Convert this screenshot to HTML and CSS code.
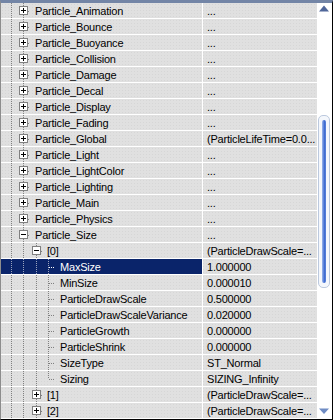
FILE: index.html
```html
<!DOCTYPE html>
<html lang="en">
<head>
  <meta charset="UTF-8">
  <title>Properties - Particle</title>
  <link rel="stylesheet" href="styles.css">
</head>
<body>
  <div class="panel">
    <div class="grid">
      <!-- collapsed groups -->
      <div class="row"><div class="name"><span class="g w12"></span><span class="node w13"><svg class="box" width="9" height="9"><rect x=".5" y=".5" width="8" height="8" fill="#fff" stroke="#808080"/><path d="M2 4.5h5M4.5 2v5" stroke="#000"/></svg><span class="link"></span></span><span class="label">Particle_Animation</span></div><div class="val">...</div></div>
      <div class="row"><div class="name"><span class="g w12"></span><span class="node w13"><svg class="box" width="9" height="9"><rect x=".5" y=".5" width="8" height="8" fill="#fff" stroke="#808080"/><path d="M2 4.5h5M4.5 2v5" stroke="#000"/></svg><span class="link"></span></span><span class="label">Particle_Bounce</span></div><div class="val">...</div></div>
      <div class="row"><div class="name"><span class="g w12"></span><span class="node w13"><svg class="box" width="9" height="9"><rect x=".5" y=".5" width="8" height="8" fill="#fff" stroke="#808080"/><path d="M2 4.5h5M4.5 2v5" stroke="#000"/></svg><span class="link"></span></span><span class="label">Particle_Buoyance</span></div><div class="val">...</div></div>
      <div class="row"><div class="name"><span class="g w12"></span><span class="node w13"><svg class="box" width="9" height="9"><rect x=".5" y=".5" width="8" height="8" fill="#fff" stroke="#808080"/><path d="M2 4.5h5M4.5 2v5" stroke="#000"/></svg><span class="link"></span></span><span class="label">Particle_Collision</span></div><div class="val">...</div></div>
      <div class="row"><div class="name"><span class="g w12"></span><span class="node w13"><svg class="box" width="9" height="9"><rect x=".5" y=".5" width="8" height="8" fill="#fff" stroke="#808080"/><path d="M2 4.5h5M4.5 2v5" stroke="#000"/></svg><span class="link"></span></span><span class="label">Particle_Damage</span></div><div class="val">...</div></div>
      <div class="row"><div class="name"><span class="g w12"></span><span class="node w13"><svg class="box" width="9" height="9"><rect x=".5" y=".5" width="8" height="8" fill="#fff" stroke="#808080"/><path d="M2 4.5h5M4.5 2v5" stroke="#000"/></svg><span class="link"></span></span><span class="label">Particle_Decal</span></div><div class="val">...</div></div>
      <div class="row"><div class="name"><span class="g w12"></span><span class="node w13"><svg class="box" width="9" height="9"><rect x=".5" y=".5" width="8" height="8" fill="#fff" stroke="#808080"/><path d="M2 4.5h5M4.5 2v5" stroke="#000"/></svg><span class="link"></span></span><span class="label">Particle_Display</span></div><div class="val">...</div></div>
      <div class="row"><div class="name"><span class="g w12"></span><span class="node w13"><svg class="box" width="9" height="9"><rect x=".5" y=".5" width="8" height="8" fill="#fff" stroke="#808080"/><path d="M2 4.5h5M4.5 2v5" stroke="#000"/></svg><span class="link"></span></span><span class="label">Particle_Fading</span></div><div class="val">...</div></div>
      <div class="row"><div class="name"><span class="g w12"></span><span class="node w13"><svg class="box" width="9" height="9"><rect x=".5" y=".5" width="8" height="8" fill="#fff" stroke="#808080"/><path d="M2 4.5h5M4.5 2v5" stroke="#000"/></svg><span class="link"></span></span><span class="label">Particle_Global</span></div><div class="val">(ParticleLifeTime=0.0...</div></div>
      <div class="row"><div class="name"><span class="g w12"></span><span class="node w13"><svg class="box" width="9" height="9"><rect x=".5" y=".5" width="8" height="8" fill="#fff" stroke="#808080"/><path d="M2 4.5h5M4.5 2v5" stroke="#000"/></svg><span class="link"></span></span><span class="label">Particle_Light</span></div><div class="val">...</div></div>
      <div class="row"><div class="name"><span class="g w12"></span><span class="node w13"><svg class="box" width="9" height="9"><rect x=".5" y=".5" width="8" height="8" fill="#fff" stroke="#808080"/><path d="M2 4.5h5M4.5 2v5" stroke="#000"/></svg><span class="link"></span></span><span class="label">Particle_LightColor</span></div><div class="val">...</div></div>
      <div class="row"><div class="name"><span class="g w12"></span><span class="node w13"><svg class="box" width="9" height="9"><rect x=".5" y=".5" width="8" height="8" fill="#fff" stroke="#808080"/><path d="M2 4.5h5M4.5 2v5" stroke="#000"/></svg><span class="link"></span></span><span class="label">Particle_Lighting</span></div><div class="val">...</div></div>
      <div class="row"><div class="name"><span class="g w12"></span><span class="node w13"><svg class="box" width="9" height="9"><rect x=".5" y=".5" width="8" height="8" fill="#fff" stroke="#808080"/><path d="M2 4.5h5M4.5 2v5" stroke="#000"/></svg><span class="link"></span></span><span class="label">Particle_Main</span></div><div class="val">...</div></div>
      <div class="row"><div class="name"><span class="g w12"></span><span class="node w13"><svg class="box" width="9" height="9"><rect x=".5" y=".5" width="8" height="8" fill="#fff" stroke="#808080"/><path d="M2 4.5h5M4.5 2v5" stroke="#000"/></svg><span class="link"></span></span><span class="label">Particle_Physics</span></div><div class="val">...</div></div>

      <!-- expanded group -->
      <div class="row"><div class="name"><span class="g w12"></span><span class="node w13"><svg class="box" width="9" height="9"><rect x=".5" y=".5" width="8" height="8" fill="#fff" stroke="#808080"/><path d="M2 4.5h5" stroke="#000"/></svg><span class="link"></span></span><span class="label">Particle_Size</span></div><div class="val">...</div></div>
      <div class="row"><div class="name"><span class="g w12"></span><span class="g w13"></span><span class="node w12"><svg class="box" width="9" height="9"><rect x=".5" y=".5" width="8" height="8" fill="#fff" stroke="#808080"/><path d="M2 4.5h5" stroke="#000"/></svg><span class="link"></span></span><span class="label">[0]</span></div><div class="val">(ParticleDrawScale=...</div></div>

      <div class="row selected"><div class="name"><span class="g w12"></span><span class="g w13"></span><span class="g w12"></span><span class="node w13"><span class="stub"></span><span class="link"></span></span><span class="label">MaxSize</span></div><div class="val">1.000000</div></div>
      <div class="row"><div class="name"><span class="g w12"></span><span class="g w13"></span><span class="g w12"></span><span class="node w13"><span class="stub"></span><span class="link"></span></span><span class="label">MinSize</span></div><div class="val">0.000010</div></div>
      <div class="row"><div class="name"><span class="g w12"></span><span class="g w13"></span><span class="g w12"></span><span class="node w13"><span class="stub"></span><span class="link"></span></span><span class="label">ParticleDrawScale</span></div><div class="val">0.500000</div></div>
      <div class="row"><div class="name"><span class="g w12"></span><span class="g w13"></span><span class="g w12"></span><span class="node w13"><span class="stub"></span><span class="link"></span></span><span class="label">ParticleDrawScaleVariance</span></div><div class="val">0.020000</div></div>
      <div class="row"><div class="name"><span class="g w12"></span><span class="g w13"></span><span class="g w12"></span><span class="node w13"><span class="stub"></span><span class="link"></span></span><span class="label">ParticleGrowth</span></div><div class="val">0.000000</div></div>
      <div class="row"><div class="name"><span class="g w12"></span><span class="g w13"></span><span class="g w12"></span><span class="node w13"><span class="stub"></span><span class="link"></span></span><span class="label">ParticleShrink</span></div><div class="val">0.000000</div></div>
      <div class="row"><div class="name"><span class="g w12"></span><span class="g w13"></span><span class="g w12"></span><span class="node w13"><span class="stub"></span><span class="link"></span></span><span class="label">SizeType</span></div><div class="val">ST_Normal</div></div>
      <div class="row"><div class="name"><span class="g w12"></span><span class="g w13"></span><span class="g w12"></span><span class="node last w13"><span class="stub"></span><span class="link"></span></span><span class="label">Sizing</span></div><div class="val">SIZING_Infinity</div></div>

      <div class="row"><div class="name"><span class="g w12"></span><span class="g w13"></span><span class="node w12"><svg class="box" width="9" height="9"><rect x=".5" y=".5" width="8" height="8" fill="#fff" stroke="#808080"/><path d="M2 4.5h5M4.5 2v5" stroke="#000"/></svg><span class="link"></span></span><span class="label">[1]</span></div><div class="val">(ParticleDrawScale=...</div></div>
      <div class="row"><div class="name"><span class="g w12"></span><span class="g w13"></span><span class="node w12"><svg class="box" width="9" height="9"><rect x=".5" y=".5" width="8" height="8" fill="#fff" stroke="#808080"/><path d="M2 4.5h5M4.5 2v5" stroke="#000"/></svg><span class="link"></span></span><span class="label">[2]</span></div><div class="val">(ParticleDrawScale=...</div></div>
    </div>

    <div class="scrollbar">
      <svg class="arrow" width="15" height="12"><path d="M2 8.5L7 2.5L12 8.5Z" fill="#50679a"/></svg>
      <div class="thumb"><div class="thumb-bar"></div></div>
      <svg class="arrow down" width="15" height="12"><path d="M2 2.5L12 2.5L7 8Z" fill="#6f8cc4"/></svg>
    </div>
  </div>
</body>
</html>
```

FILE: styles.css
```css
body {
  margin: 0;
  padding: 0;
  background: #fff;
  font-family: "Liberation Sans", Arial, sans-serif;
  font-size: 11px;
  letter-spacing: -0.2px;
  color: #000;
}

.panel {
  display: flex;
  width: 333px;
  height: 420px;
  box-sizing: border-box;
  border-top: 3px solid #7385a6;
  border-left: 1px solid #8d8d8d;
  border-right: 1px solid #000;
  border-bottom: 1px solid #000;
  overflow: hidden;
}

.grid {
  width: 316px;
  display: flex;
  flex-direction: column;
}

.row {
  display: flex;
  height: 16px;
  box-sizing: border-box;
  border-bottom: 1px solid #fff;
  background-color: #e0e0e0;
  background-image: radial-gradient(circle, #d6d6d6 0.7px, transparent 0.8px);
  background-size: 3px 3px;
}

.name {
  display: flex;
  width: 202px;
  box-sizing: border-box;
  padding-left: 4px;
  border-right: 1px solid #fff;
  overflow: hidden;
  white-space: nowrap;
}

.val {
  flex: 1;
  padding-left: 4px;
  padding-top: 1px;
  line-height: 15px;
  overflow: hidden;
  white-space: nowrap;
}

.label {
  padding-top: 1px;
  padding-left: 1px;
  line-height: 15px;
}

/* tree guides: dotted vertical line 6px into each column */
.g,
.node {
  flex: none;
  height: 15px;
  background-image: repeating-linear-gradient(#808080 0 1px, transparent 1px 2px);
  background-size: 1px 15px;
  background-repeat: no-repeat;
  background-position: 6px 0;
}

.w12 { width: 12px; }
.w13 { width: 13px; }

.node {
  display: flex;
  align-items: center;
  padding-right: 4px;
}

.node.last {
  background-size: 1px 8px;
}

.box {
  display: block;
  flex: none;
  margin-left: 2px;
}

.stub {
  flex: none;
  width: 7px;
}

.link {
  flex: 1;
  height: 1px;
  margin-top: 1px;
  background-image: repeating-linear-gradient(to right, #808080 0 1px, transparent 1px 2px);
}

.selected .name {
  background: #0a246a;
  color: #fff;
}

.selected .g,
.selected .node {
  background-image: repeating-linear-gradient(#9aa3bd 0 1px, transparent 1px 2px);
}

.selected .link {
  background-image: repeating-linear-gradient(to right, #fff 0 1px, transparent 1px 2px);
}

.scrollbar {
  width: 15px;
  display: flex;
  flex-direction: column;
  background: #fff;
}

.arrow {
  display: block;
  flex: none;
}

.thumb {
  flex: none;
  width: 12px;
  height: 173px;
  margin-top: 100px;
  margin-left: 1px;
  box-sizing: border-box;
  border: 1px solid #bcc9de;
  border-radius: 5px;
  background: #f4f7fc;
  display: flex;
  justify-content: center;
  padding: 4px 0;
}

.thumb-bar {
  width: 4px;
  border-radius: 2px;
  background: linear-gradient(to right, #9db8ee, #3f6bd0 60%, #5a83dc);
}

.arrow.down {
  margin-top: auto;
  margin-bottom: 1px;
}
```
